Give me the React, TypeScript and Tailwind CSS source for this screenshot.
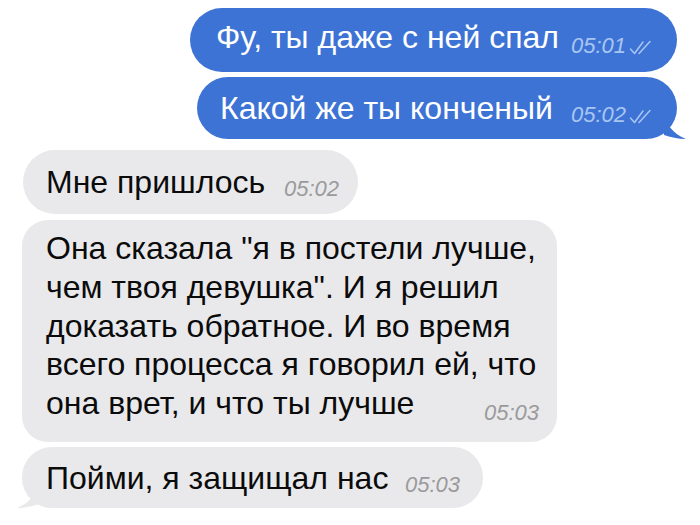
import React from "react";

const font = { fontFamily: '"Liberation Sans", Arial, sans-serif' };

function Checks() {
  return (
    <svg width="24" height="15" viewBox="0 0 24 15" fill="none" className="ml-[3px] mb-[4px]">
      <path d="M1.5 9 L5.5 13.5 L14 2" stroke="#a9c6f2" strokeWidth="1.5" strokeLinecap="round" strokeLinejoin="round" />
      <path d="M10 13.5 L21 1.5" stroke="#a9c6f2" strokeWidth="1.5" strokeLinecap="round" />
    </svg>
  );
}

export default function App() {
  return (
    <div className="w-[700px] h-[525px] bg-white overflow-hidden text-[#0b0b0b]" style={font}>
      <div className="flex flex-col pt-[8px]">
        {/* outgoing 1 */}
        <div className="self-end mr-[23px] w-[487px] h-[64px] rounded-[32px] bg-[#3d73d5] flex items-center justify-between pl-[26px] pr-[24px]">
          <span className="relative -top-[3px] text-white text-[32px] leading-[40px]">Фу, ты даже с ней спал</span>
          <span className="flex items-end mt-[12px] text-[#a9c6f2] italic text-[22px] leading-[26px]">
            05:01
            <Checks />
          </span>
        </div>
        {/* outgoing 2 */}
        <div className="relative self-end mr-[23px] mt-[5px] w-[480px] h-[62px] rounded-[31px] bg-[#3d73d5] flex items-center justify-between pl-[23px] pr-[24px]">
          <span className="text-white text-[32px] leading-[40px]">Какой же ты конченый</span>
          <span className="flex items-end mt-[14px] text-[#a9c6f2] italic text-[22px] leading-[26px]">
            05:02
            <Checks />
          </span>
          <svg className="absolute right-[-11px] bottom-0" width="24" height="22" viewBox="0 0 24 22">
            <path d="M0 0 C4 8 8 16 22 22 C14 22 6 20 0 18 Z" fill="#3d73d5" />
          </svg>
        </div>
        {/* incoming 1 */}
        <div className="ml-[23px] mt-[11px] w-[335px] h-[64px] rounded-[32px] bg-[#e9e9eb] flex items-center justify-between pl-[23px] pr-[19px]">
          <span className="text-[32px] leading-[40px]">Мне пришлось</span>
          <span className="mt-[14px] text-[#9a9a9c] italic text-[22px] leading-[26px]">05:02</span>
        </div>
        {/* incoming 2 */}
        <div className="ml-[22px] mt-[6px] w-[535px] h-[222px] rounded-[26px] bg-[#e9e9eb] pt-[9px] pl-[24px] pr-[18px]">
          <div className="text-[32px] leading-[38.75px] whitespace-nowrap">
            <div>Она сказала "я в постели лучше,</div>
            <div>чем твоя девушка". И я решил</div>
            <div>доказать обратное. И во время</div>
            <div>всего процесса я говорил ей, что</div>
            <div className="flex items-end justify-between">
              <span>она врет, и что ты лучше</span>
              <span className="mb-[-3px] text-[#9a9a9c] italic text-[22px] leading-[26px]">05:03</span>
            </div>
          </div>
        </div>
        {/* incoming 3 */}
        <div className="relative ml-[22px] mt-[5px] w-[461px] h-[61px] rounded-[30px] bg-[#e9e9eb] flex items-center justify-between pl-[24px] pr-[23px]">
          <span className="text-[32px] leading-[40px]">Пойми, я защищал нас</span>
          <span className="mt-[14px] text-[#9a9a9c] italic text-[22px] leading-[26px]">05:03</span>
          <svg className="absolute left-[-7px] bottom-0" width="24" height="22" viewBox="0 0 24 22">
            <path d="M24 0 C20 8 16 16 2 22 C10 22 18 20 24 18 Z" fill="#e9e9eb" />
          </svg>
        </div>
      </div>
    </div>
  );
}
